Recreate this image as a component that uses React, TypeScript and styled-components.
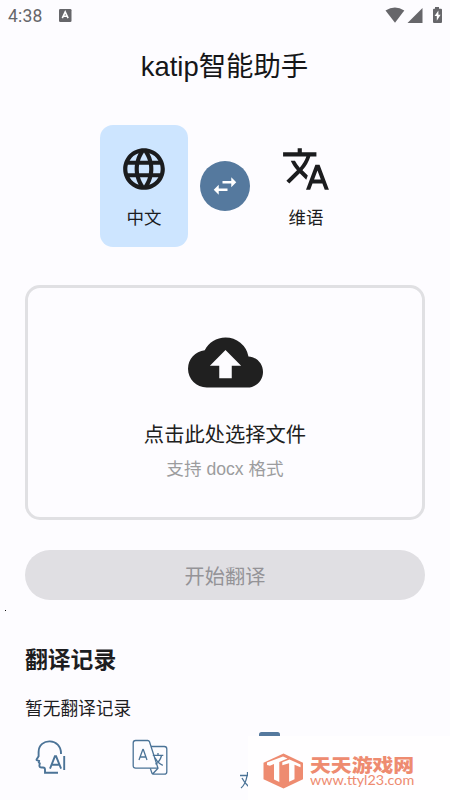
import React from 'react';
import styled, { createGlobalStyle } from 'styled-components';
import { MdLanguage, MdTranslate, MdSwapHoriz, MdBackup } from 'react-icons/md';

const GlobalStyle = createGlobalStyle`
  * { box-sizing: border-box; }
  body {
    margin: 0;
    background: #fdfcff;
    overflow: hidden;
  }
`;

const Screen = styled.div`
  position: relative;
  width: 450px;
  height: 800px;
  overflow: hidden;
  display: flex;
  flex-direction: column;
  background: #fdfcff;
  color: #1d1d1f;
  font-family: 'Liberation Sans', 'Noto Sans CJK SC', sans-serif;
`;

const StatusBar = styled.header`
  height: 32px;
  flex: none;
  display: flex;
  align-items: center;
  padding: 0 8px 2px;
  color: #66666a;
`;

const Clock = styled.span`
  font: 17.5px/20px Roboto, sans-serif;
  width: 51px;
  letter-spacing: 0.2px;
  padding-top: 1px;
`;

const StatusIcons = styled.div`
  margin-left: auto;
  margin-right: -1px;
  margin-top: -1px;
  display: flex;
`;

const Title = styled.h1`
  margin: 15px 0 0;
  height: 40px;
  flex: none;
  text-align: center;
  font-size: 27.4px;
  line-height: 40px;
  font-weight: 400;
  color: #151618;
  padding-right: 1px;
`;

const LanguageRow = styled.section`
  margin-top: 38px;
  height: 122px;
  flex: none;
  display: flex;
  justify-content: center;
  align-items: center;
  gap: 12px;
`;

const LanguageCard = styled.button<{ $active?: boolean }>`
  width: 88px;
  height: 122px;
  padding: 19px 0 0;
  border: 0;
  border-radius: 13px;
  background: ${p => (p.$active ? '#cde5ff' : 'transparent')};
  color: #1b1c1e;
  display: flex;
  flex-direction: column;
  align-items: center;
  font-family: inherit;
`;

const LanguageName = styled.span`
  font-size: 17.5px;
  line-height: 26px;
  margin-top: 11px;
`;

const SwapButton = styled.button`
  width: 50px;
  height: 50px;
  border: 0;
  padding: 0;
  border-radius: 50%;
  background: #55799e;
  color: #fff;
  display: grid;
  place-items: center;
`;

const DropZone = styled.section`
  margin: 38px 25px 0;
  height: 235px;
  flex: none;
  border: 3px solid #e0e0e3;
  border-radius: 15px;
  display: flex;
  flex-direction: column;
  align-items: center;
  padding-top: 37px;
  color: #202020;
`;

const DropTitle = styled.div`
  margin-top: 20px;
  font-size: 20.3px;
  line-height: 30px;
`;

const DropHint = styled.div`
  margin-top: 6px;
  font-size: 17.6px;
  line-height: 26px;
  color: #9c9c9e;
`;

const StartButton = styled.button`
  margin: 30px 25px 0;
  height: 50px;
  flex: none;
  border: 0;
  border-radius: 25px;
  background: #e0dfe3;
  color: #949397;
  font-family: inherit;
  font-size: 20.2px;
  line-height: 30px;
  padding: 4px 0 0;
`;

const RecordTitle = styled.h2`
  margin: 43px 25px 0;
  flex: none;
  font-size: 22.8px;
  line-height: 34px;
  font-weight: 700;
`;

const RecordEmpty = styled.p`
  margin: 18px 25px 0;
  flex: none;
  font-size: 17.7px;
  line-height: 28px;
`;

const NavBar = styled.nav`
  margin-top: auto;
  height: 76px;
  flex: none;
  display: grid;
  grid-template-columns: 100px 100px 130px;
  color: #4b7397;
`;

const NavItem = styled.div`
  display: flex;
  justify-content: center;
`;

const Speck = styled.i`
  position: absolute;
  left: 5px;
  top: 610px;
  width: 1px;
  height: 1px;
  background: #111;
`;

const Watermark = styled.aside`
  position: absolute;
  left: 248px;
  top: 736px;
  width: 202px;
  height: 64px;
  background: #fffeff;
  color: #ee8b70;
  display: flex;
  padding: 17px 0 0 15px;
  gap: 7px;
`;

const WatermarkText = styled.div`
  display: flex;
  flex-direction: column;
  align-items: flex-start;
  gap: 1px;
  padding-top: 1px;
  white-space: nowrap;
`;

const SiteName = styled.strong`
  font: 900 18.6px/19px 'Noto Sans CJK SC', sans-serif;
  height: 19px;
  transform: scaleX(1.12);
  transform-origin: left;
`;

const SiteUrl = styled.span`
  font: 12.6px/14px Lato, sans-serif;
  transform: scaleX(1.14);
  transform-origin: left;
`;

export default function App() {
  return (
    <Screen>
      <GlobalStyle />
      <StatusBar>
        <Clock>4:38</Clock>
        <svg width="13" height="13" viewBox="0 0 13 13">
          <rect width="12.5" height="13" rx="1.3" fill="currentColor" />
          <path d="M3.3 9.2 6.2 3l2.9 6.2M4.5 7.3h3.4" fill="none" stroke="#fff" strokeWidth="1.6" />
        </svg>
        <StatusIcons>
          <svg width="58" height="18" viewBox="0 0 58 18" fill="currentColor">
            <path d="M0.5 4.6Q10 -1.8 19.3 4.6L10 16.7Z" />
            <path d="M22.5 17 37.5 2v15Z" />
            <path d="M50 1h4v1.8h2q1 0 1 1V16q0 1-1 1h-7q-1 0-1-1V3.8q0-1 1-1h1Z" />
            <path d="m53.4 4.5-3.8 5.6h2.2v4.6l3.8-6h-2.2Z" fill="#fff" />
          </svg>
        </StatusIcons>
      </StatusBar>
      <Title>katip智能助手</Title>
      <LanguageRow>
        <LanguageCard $active>
          <MdLanguage size={50} />
          <LanguageName>中文</LanguageName>
        </LanguageCard>
        <SwapButton>
          <MdSwapHoriz size={30} />
        </SwapButton>
        <LanguageCard>
          <MdTranslate size={50} />
          <LanguageName>维语</LanguageName>
        </LanguageCard>
      </LanguageRow>
      <DropZone>
        <MdBackup size={75} />
        <DropTitle>点击此处选择文件</DropTitle>
        <DropHint>支持 docx 格式</DropHint>
      </DropZone>
      <StartButton disabled>开始翻译</StartButton>
      <RecordTitle>翻译记录</RecordTitle>
      <RecordEmpty>暂无翻译记录</RecordEmpty>
      <NavBar>
        <NavItem>
          <svg width="32" height="60" viewBox="0 0 32 60" fill="none" stroke="currentColor" strokeWidth="1.9">
            <path d="M27 30C27.5 13.5 4.5 13.5 4.6 28v4.2L2.7 35.2q-.5.8.7 1.1l1.7.5-.3 1.6 1 1-.4 1.9q-.2 2.2 2.4 2.2h1.2q2 0 2 2v3.2H24" />
            <path d="M16 44.7 20.9 32.3h1.2L27.1 44.7M17.7 40.8h7.6M30.2 32v14" />
          </svg>
        </NavItem>
        <NavItem>
          <svg width="36" height="60" viewBox="0 0 36 60" fill="none" stroke="currentColor" strokeWidth="1.3" strokeLinejoin="round">
            <path d="M3.7 16.5h12q1.3 0 1.8 1.3L26 44.2H3.7q-2.5 0-2.5-2.5V19q0-2.5 2.5-2.5Z" />
            <path d="M19 22.5h13.3q2.5 0 2.5 2.5v22.7q0 2.5-2.5 2.5h-11q-1 0-1.3-.9L18.3 44.4M20.6 50 26 44.2" />
            <path d="m7 36 3.8-10.5h.5L15 36M8.2 33h5.6M20.8 31.3h10.5M26 29v2.3M23 33.7q2.3 5.2 7.8 7.7M29.5 31.5q-1.2 5.5-6 8.7" />
          </svg>
        </NavItem>
        <NavItem>
          <svg width="130" height="76" viewBox="200 724 130 76" fill="none" stroke="currentColor" strokeWidth="1.3">
            <rect x="259" y="732" width="21" height="10" rx="2.5" fill="#55799e" stroke="none" />
            <path d="M240 775.5h9M247.5 772v3M241 788q4.5-3.5 6-12M242 778q2.5 5 7 9" />
          </svg>
        </NavItem>
      </NavBar>
      <Speck />
      <Watermark>
        <svg width="40" height="36" viewBox="0 0 40 36">
          <path d="M20.5.5 40 9.8v16.4L20.5 35.5.5 26.2V9.8Z" fill="currentColor" />
          <path d="m4 12 0-2.6L20 3.6l4.5 2L16.3 9v20l-5.3-2.6V11l-4 1.8Z" fill="#fff" />
          <path d="m19.3 12.2 0-3L26.5 6.6l11 4.8v2.9l-6-2.5v14.4l-5.4 2.6V10.2Z" fill="#fff" />
        </svg>
        <WatermarkText>
          <SiteName>天天游戏网</SiteName>
          <SiteUrl>www.ttyl23.com</SiteUrl>
        </WatermarkText>
      </Watermark>
    </Screen>
  );
}
